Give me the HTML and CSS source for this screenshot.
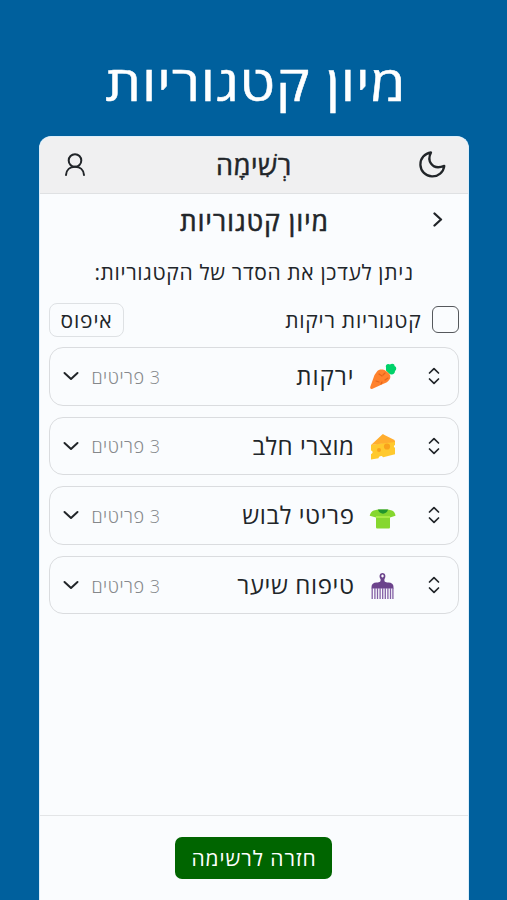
FILE: index.html
```html
<!DOCTYPE html>
<html lang="he" dir="rtl">
<head>
<meta charset="utf-8">
<meta name="viewport" content="width=device-width, initial-scale=1">
<title>מיון קטגוריות</title>
<link rel="stylesheet" href="styles.css">
</head>
<body>
<svg class="defs" width="0" height="0" aria-hidden="true">
  <symbol id="sort" viewBox="0 0 12 18"><path d="M1.500 6 6 1.600 10.500 6M1.500 12 6 16.400 10.500 12"/></symbol>
  <symbol id="down" viewBox="0 0 16 10"><path d="M1.500 2 8 8l6.500-6"/></symbol>
</svg>
<h1 class="headline"><span>מיון קטגוריות</span></h1>
<main class="phone">
  <header class="topbar">
    <svg class="icon moon" viewBox="0 0 28 28"><path d="M13 1.500A12 12 0 1 0 26.300 14.800C20.500 17.200 15.500 16 13 12.500 10.800 9.500 11.200 5 13 1.500Z"/></svg>
    <div class="brand"><span>רְשִׁימָה</span></div>
    <svg class="icon user" viewBox="0 0 20 23"><circle cx="10" cy="7.500" r="6.300"/><path d="M1 22c.3-5.200 4-8.200 9-8.200s8.700 3 9 8.200"/></svg>
  </header>
  <div class="titlebar">
    <h2 class="title">מיון קטגוריות</h2>
    <svg class="icon back" viewBox="0 0 10 15"><path d="M1.500 1.500 8 7.500l-6.500 6"/></svg>
  </div>
  <p class="hint"><span>ניתן לעדכן את הסדר של הקטגוריות:</span></p>
  <div class="options">
    <label class="check"><i class="box"></i><span>קטגוריות ריקות</span></label>
    <button class="reset"><span>איפוס</span></button>
  </div>
  <ul class="list">
    <li class="row">
      <svg class="icon sort"><use href="#sort"/></svg>
      <svg class="emoji" viewBox="0 0 28 28"><path fill="#00d26a" d="M17 5.500c-1-3 2-4.500 4-3 1.500-1.500 5-1 4.500 1.500 2.500 1 2 4 .5 5 0 3.500-3.500 4.500-6 2.500l-3-3Z"/><path fill="#ff822d" d="M8 9.500C10 7 14 7 17 9c4 2.500 5.500 5.500 3.500 8.500-1.500 2.500-3.500 3.300-6 4.200L3.500 26.700c-1.800.7-2.700-.4-2.200-2L5.500 13Z"/><path class="marks" d="m10 12 3 2m3-3-2 2m5 3-3 2m-9 1 3 1m3 0-1 2"/></svg>
      <span class="name short">ירקות</span><span class="count">3 פריטים</span>
      <svg class="icon down"><use href="#down"/></svg>
    </li>
    <li class="row">
      <svg class="icon sort"><use href="#sort"/></svg>
      <svg class="emoji" viewBox="0 0 28 28"><path fill="#ffc92e" d="m2 13 24-4v4c-1.500.5-1.500 2.500 0 2.800v6.500l-12 3c-1-2-4-1.500-4.500.9L2 27.500V22c2.200-.7 2.200-3 0-3.500Z"/><path fill="#ffad2e" d="M2 13 13 2.700c.7-.7 1.300-.5 2 0l10.500 5.300.5 2Z"/><circle cx="18" cy="14.500" r="3.100" fill="#f9a21c"/><circle cx="10" cy="18" r="2" fill="#f9a21c"/></svg>
      <span class="name dairy">מוצרי חלב</span><span class="count">3 פריטים</span>
      <svg class="icon down"><use href="#down"/></svg>
    </li>
    <li class="row">
      <svg class="icon sort"><use href="#sort"/></svg>
      <svg class="emoji" viewBox="0 0 28 28"><g transform="translate(0 2.500)"><path fill="#86d72f" d="M9 6h10l4 1c2 .8 3.200 2.500 3.500 5.300L21 14v9.500c0 1.200-.5 1.500-1.500 1.500h-11C7.500 25 7 24.500 7 23.500V14l-6.300-1.700C1.300 9.500 2.500 7.800 4.700 7Z"/><path fill="#a8ea45" d="M7 12.500h14v2H7Z"/><path fill="#21952d" d="M9 6h10c-1 5.500-9 5.500-10 0Z"/></g></svg>
      <span class="name">פריטי לבוש</span><span class="count">3 פריטים</span>
      <svg class="icon down"><use href="#down"/></svg>
    </li>
    <li class="row">
      <svg class="icon sort"><use href="#sort"/></svg>
      <svg class="emoji" viewBox="0 0 28 28"><path fill="#6b438b" fill-rule="evenodd" d="M2.500 16c0-3 2-4.500 5-4.500C11 11.500 12 10.500 11.500 8c-2-3-.5-6 2-6s4 3 2 6c-.5 2.500.5 3.500 4 3.500 3 0 5 1.500 5 4.500v1.500h-22ZM13.500 3.500a1.200 1.500 0 1 0 .01 0Z"/><path class="teeth" d="M3.200 17v11M5.900 17v11M8.500 17v11M11.100 17v11M13.700 17v11M16.300 17v11M18.900 17v11M21.500 17v11M23.900 17v11"/></svg>
      <span class="name">טיפוח שיער</span><span class="count">3 פריטים</span>
      <svg class="icon down"><use href="#down"/></svg>
    </li>
  </ul>
  <footer class="footer"><button class="primary"><span>חזרה לרשימה</span></button></footer>
</main>
</body>
</html>
```
FILE: styles.css
```css
* { box-sizing: border-box; }
html, body { height: 100%; }
body {
  margin: 0;
  display: flex;
  flex-direction: column;
  align-items: center;
  overflow: hidden;
  background: #00609d;
  color: #212529;
  font-family: "Open Sans", "Noto Sans", sans-serif;
  font-weight: 400;
}
.defs { position: absolute; }
.headline {
  margin: 0;
  height: 136px;
  padding: 49px 0 0 4px;
  color: #fff;
  font-size: 49px;
  line-height: 66px;
  font-weight: 400;
  white-space: nowrap;
}
.headline span {
  display: inline-block;
  transform: scaleX(1.15);
  letter-spacing: .8px;
  -webkit-text-stroke: .5px #fff;
}
.phone {
  width: 430px;
  flex: 1;
  display: flex;
  flex-direction: column;
  border: 1px solid #dceefa;
  border-bottom: 0;
  border-radius: 12px 12px 0 0;
  background: #fafcfe;
  overflow: hidden;
}
.icon {
  display: block;
  flex: none;
  fill: none;
  stroke: #212529;
  stroke-width: 2;
  stroke-linecap: round;
  stroke-linejoin: round;
}
.topbar {
  height: 57px;
  display: flex;
  align-items: center;
  justify-content: space-between;
  padding: 0 22px 0 25px;
  background: #f0f0f1;
  border-bottom: 1px solid #dfe1e3;
}
.moon { width: 28px; height: 28px; stroke-width: 2.300; }
.user { width: 20px; height: 23px; margin-bottom: 2px; }
.brand {
  margin-right: -6px;
  font-size: 27px;
  line-height: 40px;
  letter-spacing: .6px;
  -webkit-text-stroke: .5px #212529;
}
.titlebar {
  height: 54px;
  display: grid;
  grid-template-columns: 1fr auto 1fr;
  align-items: center;
}
.title {
  grid-column: 2;
  grid-row: 1;
  margin: 0;
  padding-left: 2px;
  font-size: 26px;
  line-height: 36px;
  font-weight: 400;
  letter-spacing: 1.200px;
  -webkit-text-stroke: .6px #212529;
}
.back { grid-column: 1; grid-row: 1; width: 10px; height: 15px; margin: 0 25px 3px 0; stroke-width: 2.300; }
.hint { margin: 8px 0 0; padding-left: 1px; font-size: 21px; line-height: 32px; text-align: center; letter-spacing: .65px; }
.options {
  display: flex;
  justify-content: space-between;
  align-items: center;
  height: 34px;
  margin: 15px 9px 10px;
}
.check { display: flex; align-items: center; gap: 10px; font-size: 21px; line-height: 32px; letter-spacing: .75px; }
.box { width: 27px; height: 27px; margin-bottom: 1px; border: 1.500px solid #55585c; border-radius: 6px; }
.reset {
  width: 75px;
  height: 34px;
  padding: 0 0 0 1px;
  border: 1px solid #dee1e4;
  border-radius: 8px;
  background: transparent;
  color: inherit;
  font: inherit;
  font-size: 21px;
  line-height: 30px;
  letter-spacing: .8px;
}
.list { margin: 0 9px; padding: 0; list-style: none; display: flex; flex-direction: column; gap: 11px; }
.row {
  height: 58.600px;
  display: flex;
  align-items: center;
  padding: 0 18px 0 13px;
  border: 1.500px solid #dadcdf;
  border-radius: 14px;
}
.sort { width: 12px; height: 18px; stroke-width: 1.700; }
.down { width: 16px; height: 10px; }
.emoji { width: 28px; height: 28px; margin: 0 31px 0 14px; flex: none; }
.marks { fill: none; stroke: #e5661c; stroke-width: 1.200; stroke-linecap: round; }
.teeth { fill: none; stroke: #8460a5; stroke-width: 1.300; }
.name { flex: 1; font-size: 24px; line-height: 36px; letter-spacing: .6px; white-space: nowrap; }
.short { letter-spacing: 1px; }
.dairy { letter-spacing: .5px; }
.count { margin-left: 13px; padding-top: 1px; font-size: 18px; font-weight: 300; letter-spacing: .55px; color: #85888b; white-space: nowrap; }
.footer {
  margin-top: auto;
  height: 85px;
  display: flex;
  justify-content: center;
  align-items: center;
  border-top: 1.500px solid #e3e5e7;
}
.primary {
  width: 157px;
  height: 42px;
  padding: 0 0 0 1px;
  border: 0;
  border-radius: 7px;
  background: #006500;
  color: #fff;
  font: inherit;
  font-size: 21px;
  line-height: 42px;
  letter-spacing: .95px;
}
```
